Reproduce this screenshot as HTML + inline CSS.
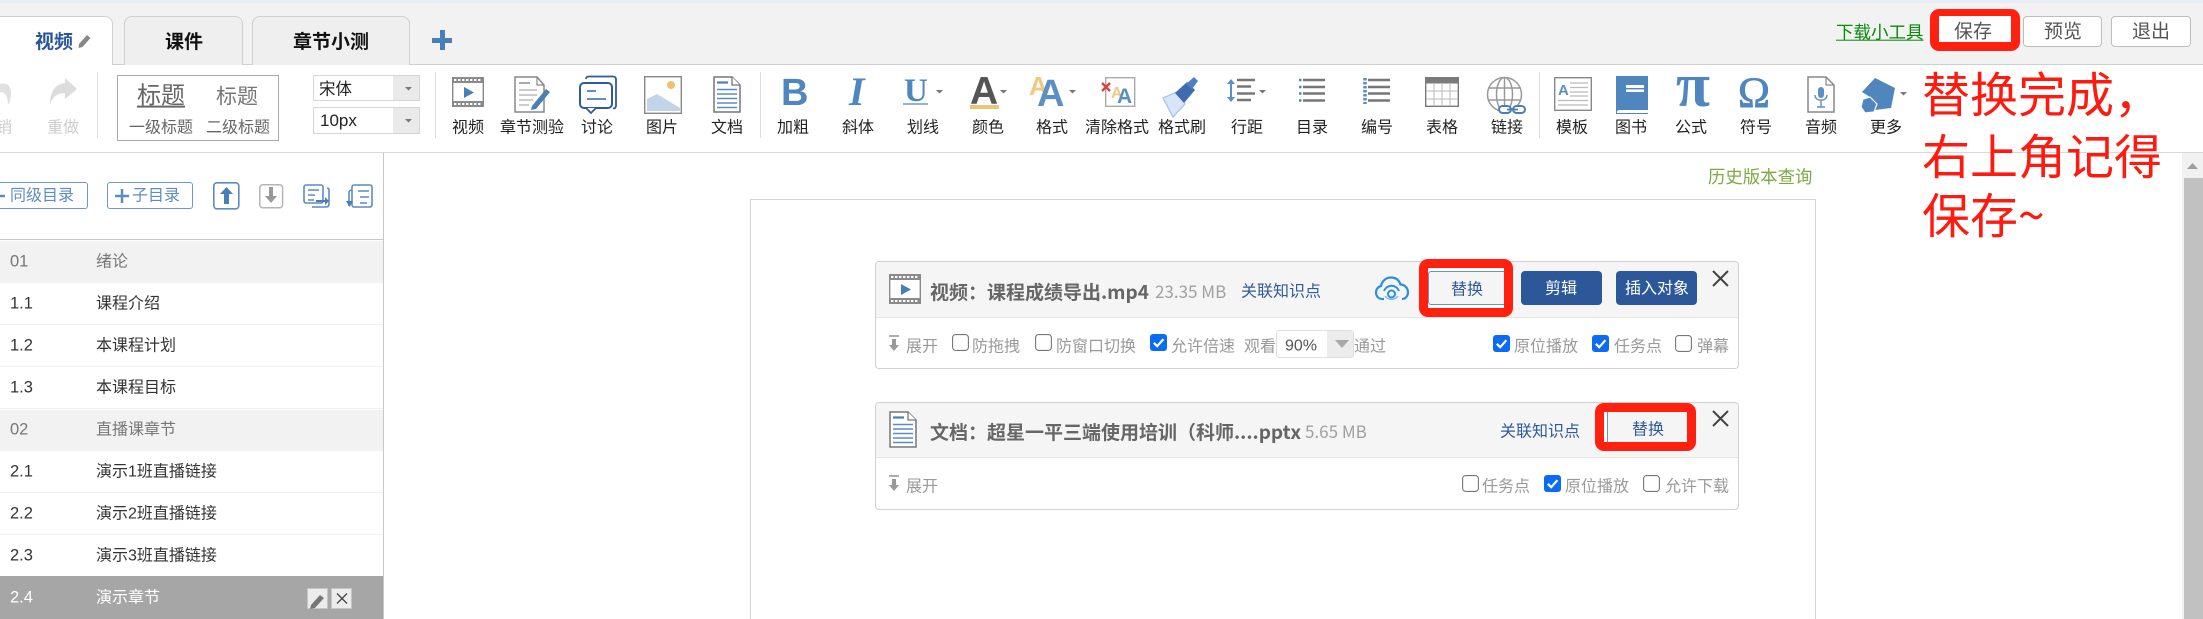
<!DOCTYPE html>
<html lang="zh-CN"><head><meta charset="utf-8"><title>编辑</title>
<style>
html,body{margin:0;padding:0;background:#fff}
#p{position:relative;width:2203px;height:619px;overflow:hidden;background:#fff;font-family:"Liberation Sans","Noto Sans CJK SC",sans-serif;color:#333;filter:blur(.3px)}
#p div{position:absolute;box-sizing:border-box}
.t,.c{position:absolute;white-space:nowrap;line-height:1.2}
.t{transform:translateY(calc(-50% + 1.2px))}
.c{transform:translate(-50%,-50%)}
.l{font-size:16px;color:#222;top:128px}
.h{font-size:19px;font-weight:bold;color:#111;top:42px}
.g{font-size:16px;color:#9a9a9a}
.n{font-size:16.5px;left:10px}
.s{font-size:16px;left:96px}
.y{color:#777}
.tt{font-size:19px;font-weight:bold;color:#666;font-family:"Noto Sans CJK SC",sans-serif;left:930px}
.mb{font-size:17px;color:#a0a0a0;font-family:"Noto Sans CJK SC",sans-serif}
.lk{font-size:16px;color:#2f5a9e}
.bt{font-size:19px;color:#555;top:33px}
.btn{background:#fff;border:1px solid #bdbdbd;border-radius:4px;top:16px;height:31px}
.red{border:9px solid #ff2010;border-radius:9px}
.sel{background:#fff;border:1px solid #d5d5d5}
.sel i{position:absolute;right:0;top:0;bottom:0;width:26px;background:#eaeaea;display:block}
.rr{color:#ff1a10;font-size:48px;left:1922px;font-family:"Noto Sans CJK SC",sans-serif;font-weight:400;line-height:1.2}
</style></head><body><div id="p">

<!-- top bar -->
<div style="left:0;top:0;width:2203px;height:65px;background:#f2f2f2;border-bottom:1px solid #cfcfcf"></div>
<div style="left:0;top:0;width:2203px;height:3px;background:#e8edf3"></div>
<div style="left:-20px;top:16px;width:133px;height:49px;background:#fff;border:1px solid #cfcfcf;border-bottom:0;border-radius:8px 8px 0 0"></div>
<div style="left:124px;top:16px;width:119px;height:49px;background:#efefef;border:1px solid #cfcfcf;border-bottom:0;border-radius:8px 8px 0 0"></div>
<div style="left:252px;top:16px;width:158px;height:49px;background:#efefef;border:1px solid #cfcfcf;border-bottom:0;border-radius:8px 8px 0 0"></div>
<span class="t h" style="left:35px;color:#2a5699">视频</span>
<span class="t h" style="left:165px">课件</span>
<span class="t h" style="left:293px">章节小测</span>
<div style="left:432px;top:38px;width:20px;height:5px;background:#4a7eb9"></div>
<div style="left:440px;top:30px;width:5px;height:20px;background:#4a7eb9"></div>

<span class="t" style="left:1836px;top:32px;font-size:17.5px;color:#0a8a0a;text-decoration:underline">下载小工具</span>
<div class="btn" style="left:2023px;width:79px"></div>
<div class="btn" style="left:2111px;width:80px"></div>
<div class="red" style="left:1930px;top:9px;width:90px;height:42px;background:#fff;border-width:7px 9px 9px 9px"></div>
<span class="c bt" style="left:1973px">保存</span>
<span class="c bt" style="left:2063px">预览</span>
<span class="c bt" style="left:2151px">退出</span>

<!-- toolbar -->
<div style="left:0;top:152px;width:2203px;height:1px;background:#d8d8d8"></div>
<div style="left:97px;top:72px;width:1px;height:66px;background:#ddd"></div>
<div style="left:435px;top:72px;width:1px;height:66px;background:#ddd"></div>
<div style="left:760px;top:72px;width:1px;height:66px;background:#ddd"></div>
<div style="left:1539px;top:72px;width:1px;height:66px;background:#ddd"></div>
<span class="c" style="left:4px;top:128px;font-size:16px;color:#ccc">销</span>
<span class="c" style="left:63px;top:128px;font-size:16px;color:#ccc">重做</span>
<div style="left:117px;top:75px;width:162px;height:66px;border:1px solid #aaa;background:#fff"></div>
<span class="c" style="left:161px;top:97px;font-size:24px;color:#666;text-decoration:underline">标题</span>
<span class="c" style="left:237px;top:97px;font-size:21px;color:#777">标题</span>
<span class="c" style="left:161px;top:128px;font-size:16px;color:#666">一级标题</span>
<span class="c" style="left:238px;top:128px;font-size:16px;color:#666">二级标题</span>
<div class="sel" style="left:313px;top:75px;width:107px;height:26px"><i></i></div>
<div class="sel" style="left:313px;top:107px;width:107px;height:27px"><i></i></div>
<span class="t" style="left:319px;top:89px;font-size:16.5px;color:#222">宋体</span>
<span class="t" style="left:320px;top:120px;font-size:17px;color:#222">10px</span>

<span class="c l" style="left:468px">视频</span>
<span class="c l" style="left:532px">章节测验</span>
<span class="c l" style="left:597px">讨论</span>
<span class="c l" style="left:662px">图片</span>
<span class="c l" style="left:727px">文档</span>
<span class="c l" style="left:793px">加粗</span>
<span class="c l" style="left:858px">斜体</span>
<span class="c l" style="left:923px">划线</span>
<span class="c l" style="left:988px">颜色</span>
<span class="c l" style="left:1052px">格式</span>
<span class="c l" style="left:1117px">清除格式</span>
<span class="c l" style="left:1182px">格式刷</span>
<span class="c l" style="left:1247px">行距</span>
<span class="c l" style="left:1312px">目录</span>
<span class="c l" style="left:1377px">编号</span>
<span class="c l" style="left:1442px">表格</span>
<span class="c l" style="left:1507px">链接</span>
<span class="c l" style="left:1572px">模板</span>
<span class="c l" style="left:1631px">图书</span>
<span class="c l" style="left:1691px">公式</span>
<span class="c l" style="left:1756px">符号</span>
<span class="c l" style="left:1821px">音频</span>
<span class="c l" style="left:1886px">更多</span>

<!-- sidebar -->
<div style="left:383px;top:153px;width:1px;height:466px;background:#c8c8c8"></div>
<div style="left:-10px;top:182px;width:98px;height:27px;border:1.5px solid #6a9acb;border-radius:3px"></div>
<div style="left:107px;top:182px;width:86px;height:27px;border:1.5px solid #6a9acb;border-radius:3px"></div>
<span class="t" style="left:10px;top:195px;font-size:16px;color:#5d8cc0">同级目录</span>
<span class="t" style="left:132px;top:195px;font-size:16px;color:#5d8cc0">子目录</span>

<div style="left:0;top:239px;width:383px;height:1px;background:#c8c8c8"></div>
<div style="left:0;top:241px;width:383px;height:42px;background:#f2f2f2"></div>
<div style="left:0;top:324px;width:383px;height:1px;background:#efefef"></div>
<div style="left:0;top:366px;width:383px;height:1px;background:#efefef"></div>
<div style="left:0;top:408px;width:383px;height:1px;background:#efefef"></div>
<div style="left:0;top:410px;width:383px;height:41px;background:#f2f2f2"></div>
<div style="left:0;top:492px;width:383px;height:1px;background:#efefef"></div>
<div style="left:0;top:534px;width:383px;height:1px;background:#efefef"></div>
<div style="left:0;top:576px;width:383px;height:43px;background:#a6a6a6"></div>
<div style="left:307px;top:588px;width:21px;height:21px;background:#ececec;border:1px solid #c4c4c4"></div>
<div style="left:331px;top:588px;width:21px;height:21px;background:#ececec;border:1px solid #c4c4c4"></div>

<span class="t n y" style="top:261px">01</span><span class="t s y" style="top:261px">绪论</span>
<span class="t n" style="top:303px">1.1</span><span class="t s" style="top:303px">课程介绍</span>
<span class="t n" style="top:345px">1.2</span><span class="t s" style="top:345px">本课程计划</span>
<span class="t n" style="top:387px">1.3</span><span class="t s" style="top:387px">本课程目标</span>
<span class="t n y" style="top:429px">02</span><span class="t s y" style="top:429px">直播课章节</span>
<span class="t n" style="top:471px">2.1</span><span class="t s" style="top:471px">演示1班直播链接</span>
<span class="t n" style="top:513px">2.2</span><span class="t s" style="top:513px">演示2班直播链接</span>
<span class="t n" style="top:555px">2.3</span><span class="t s" style="top:555px">演示3班直播链接</span>
<span class="t n" style="top:597px;color:#fff">2.4</span><span class="t s" style="top:597px;color:#fff">演示章节</span>

<!-- content -->
<span class="t" style="left:1708px;top:176px;font-size:17.4px;color:#7fa843">历史版本查询</span>
<div style="left:750px;top:199px;width:1066px;height:440px;border:1px solid #d5d5d5"></div>

<!-- card 1 -->
<div style="left:875px;top:261px;width:864px;height:108px;border:1px solid #d0d0d0;border-radius:4px;background:#fff"></div>
<div style="left:876px;top:262px;width:862px;height:56px;background:#f5f5f5;border-bottom:1px solid #e6e6e6;border-radius:3px 3px 0 0"></div>
<span class="t tt" style="top:291px">视频：课程成绩导出.mp4</span>
<span class="t mb" style="left:1155px;top:290px">23.35 MB</span>
<span class="t lk" style="left:1241px;top:291px">关联知识点</span>
<div style="left:1521px;top:271px;width:81px;height:34px;background:#2c5899;border-radius:4px"></div>
<div style="left:1616px;top:271px;width:81px;height:34px;background:#2c5899;border-radius:4px"></div>
<span class="c" style="left:1561px;top:289px;font-size:16px;color:#fff">剪辑</span>
<span class="c" style="left:1657px;top:289px;font-size:16px;color:#fff">插入对象</span>
<div style="left:1419px;top:259px;width:94px;height:58px;border:9px solid #ff2010;border-radius:9px;background:#fff"></div>
<div style="left:1428px;top:271px;width:76px;height:34px;background:#f5f5f5;border:1px solid #6d8fc4;border-right:0;border-radius:3px 0 0 3px"></div>
<span class="c lk" style="left:1467px;top:290px">替换</span>
<span class="t g" style="left:906px;top:346px">展开</span>
<span class="t g" style="left:972px;top:346px">防拖拽</span>
<span class="t g" style="left:1056px;top:346px">防窗口切换</span>
<span class="t g" style="left:1171px;top:346px">允许倍速</span>
<span class="t g" style="left:1244px;top:346px">观看</span>
<div style="left:1276px;top:330px;width:78px;height:28px;background:#fff;border:1px solid #ddd;border-radius:3px"><i style="position:absolute;right:0;top:0;bottom:0;width:26px;background:#ececec;display:block"></i></div>
<span class="c" style="left:1301px;top:346px;font-size:16px;color:#555">90%</span>
<span class="t g" style="left:1354px;top:346px">通过</span>
<span class="t g" style="left:1514px;top:346px">原位播放</span>
<span class="t g" style="left:1614px;top:346px">任务点</span>
<span class="t g" style="left:1697px;top:346px">弹幕</span>

<!-- card 2 -->
<div style="left:875px;top:402px;width:864px;height:108px;border:1px solid #d0d0d0;border-radius:4px;background:#fff"></div>
<div style="left:876px;top:403px;width:862px;height:55px;background:#f5f5f5;border-bottom:1px solid #e6e6e6;border-radius:3px 3px 0 0"></div>
<span class="t tt" style="top:431px">文档：超星一平三端使用培训（科师....pptx</span>
<span class="t mb" style="left:1305px;top:430px">5.65 MB</span>
<span class="t lk" style="left:1500px;top:431px">关联知识点</span>
<div style="left:1595px;top:403px;width:101px;height:48px;border:9px solid #ff2010;border-radius:9px;background:#fff"></div>
<div style="left:1607px;top:412px;width:80px;height:30px;background:#f5f5f5;border-left:1px solid #6d8fc4"></div>
<span class="c lk" style="left:1648px;top:430px">替换</span>
<span class="t g" style="left:906px;top:486px">展开</span>
<span class="t g" style="left:1482px;top:486px">任务点</span>
<span class="t g" style="left:1565px;top:486px">原位播放</span>
<span class="t g" style="left:1665px;top:486px">允许下载</span>

<!-- scrollbar -->
<div style="left:2182px;top:153px;width:21px;height:466px;background:#f1f1f1"></div>
<div style="left:2184px;top:178px;width:19px;height:441px;background:#c1c1c1"></div>

<!-- annotation -->
<span class="rr" style="position:absolute;top:63px;white-space:nowrap">替换完成，</span>
<span class="rr" style="position:absolute;top:125px;white-space:nowrap">右上角记得</span>
<span class="rr" style="position:absolute;top:184px;white-space:nowrap">保存~</span>

<!-- icons -->
<svg style="position:absolute;left:0;top:0" width="2203" height="619" viewBox="0 0 2203 619">
<defs>
<g id="vid">
<rect x="452.7" y="77.7" width="30.6" height="28.6" fill="#fff" stroke="#8a8a8a" stroke-width="1.4"/>
<rect x="452" y="77" width="32" height="6" fill="#8a8a8a"/><rect x="452" y="101" width="32" height="6" fill="#8a8a8a"/>
<path d="M454 80h28M454 104h28" stroke="#fff" stroke-width="2" stroke-dasharray="2.4 1.6"/>
<path d="M464 87l10 5.500-10 5.500z" fill="#4a7fb5"/>
</g>
<g id="doc">
<path d="M714 77h18l8 8v27h-26z" fill="#fff" stroke="#777" stroke-width="1.5"/>
<path d="M732 77v8h8" fill="#fff" stroke="#777" stroke-width="1.300"/>
<path d="M717 82.500h11" stroke="#4a7fb5" stroke-width="2.200"/>
<path d="M717 89.500h20M717 94h20M717 98.500h20M717 103h20M717 107.500h20" stroke="#5b8cc0" stroke-width="1.400"/>
</g>
<g id="ck"><rect width="17" height="17" rx="3" fill="#0a6cf5"/><path d="M3.800 8.800l3.400 3.400 6.200-7" fill="none" stroke="#fff" stroke-width="2.200"/></g>
<g id="un"><rect x=".6" y=".6" width="15.800" height="15.800" rx="3" fill="#fff" stroke="#767676" stroke-width="1.100"/></g>
<path id="ar" d="M0 0h7l-3.500 3.500z" fill="#777"/>
<g id="x"><path d="M0 0l15 15M15 0l-15 15" stroke="#444" stroke-width="2"/></g>
<g id="dn"><path d="M889 336h10" stroke="#999" stroke-width="1.600"/><path d="M892 339h4v6h3l-5 6-5-6h3z" fill="#999"/></g>
</defs>

<!-- pencil on tab -->
<path d="M79 44l8-9 3.500 3-8 9-4 1z" fill="#888"/>
<!-- undo / redo -->
<path d="M0 84c7-2 12 2 11 12c-.500 3-1 6-3 9c0-7-2-13-8-13z" fill="#e0e0e0"/>
<path d="M65 78l12 11-12 10v-6c-7 0-12 3-15 11c0-12 5-20 15-21z" fill="#dcdcdc"/>
<!-- select arrows -->
<use href="#ar" x="405" y="87"/><use href="#ar" x="405" y="119"/>

<use href="#vid"/>
<!-- quiz -->
<path d="M515 77h22l7 8v27h-29z" fill="#fff" stroke="#888" stroke-width="1.500"/>
<path d="M537 77v8h7" fill="none" stroke="#888" stroke-width="1.200"/>
<path d="M519 83h11" stroke="#aaa" stroke-width="2"/>
<path d="M519 90h18M519 95h18M519 100h14M519 105h10" stroke="#bbb" stroke-width="1.500"/>
<path d="M532 106l14-17 4 3-14 17-5 1z" fill="#4a7fb5"/>
<!-- discuss -->
<path d="M586 79q0-2.500 3-2.500h24q3 0 3 3v26q0 3-3 3" fill="none" stroke="#2f5a9e" stroke-width="1.800"/>
<rect x="580" y="83" width="32" height="25" rx="4" fill="#fff" stroke="#2f5a9e" stroke-width="2"/>
<path d="M586 108l5 5 5-5" fill="#fff" stroke="#2f5a9e" stroke-width="1.800"/>
<path d="M587 91h9M587 99h19" stroke="#4a7fb5" stroke-width="1.800"/>
<!-- image -->
<rect x="644.700" y="76.700" width="36.600" height="36.600" fill="#fff" stroke="#888" stroke-width="1.400"/>
<circle cx="671" cy="85" r="4" fill="#eec06f"/>
<path d="M647 111v-12l10-5 23 14v3z" fill="#c1d4e9"/>
<use href="#doc"/>
<!-- B I U -->
<text x="781" y="105" font-family="Liberation Sans" font-weight="bold" font-size="38" fill="#4f86bd">B</text>
<text x="849" y="105" font-family="Liberation Serif" font-style="italic" font-weight="bold" font-size="40" fill="#4f86bd">I</text>
<text x="904" y="101" font-family="Liberation Serif" font-weight="bold" font-size="33" fill="#4f86bd">U</text>
<path d="M903 104h25" stroke="#6d9bc8" stroke-width="1.400"/>
<use href="#ar" x="936" y="90"/>
<!-- A colour -->
<text x="970" y="104" font-family="Liberation Sans" font-weight="bold" font-size="39" fill="#555">A</text>
<rect x="970" y="105" width="29" height="4" fill="#edc375"/>
<use href="#ar" x="1000" y="90"/>
<!-- AA -->
<text x="1029" y="95" font-family="Liberation Sans" font-weight="bold" font-size="26" fill="#f0c981">A</text>
<text x="1037" y="106" font-family="Liberation Sans" font-weight="bold" font-size="38" fill="#5b90c3">A</text>
<use href="#ar" x="1069" y="90"/>
<!-- clear -->
<rect x="1105.700" y="77.700" width="29" height="28.600" fill="#fff" stroke="#aaa" stroke-width="1.400"/>
<path d="M1102 83l8 8M1110 83l-8 8" stroke="#d94040" stroke-width="2.400"/>
<text x="1111" y="98" font-family="Liberation Sans" font-weight="bold" font-size="16" fill="#f0c981">A</text>
<text x="1117" y="103" font-family="Liberation Sans" font-weight="bold" font-size="21" fill="#5b90c3">A</text>
<!-- brush -->
<path d="M1163 98l16-7 6 13-12 13z" fill="#d8e6f8" stroke="#a9c8ee" stroke-width="1.400"/>
<path d="M1175 93l12-11 8 8-11 13z" fill="#3f6bb0"/>
<path d="M1186 84l8-7 4 4-6 8z" fill="#4f7fc0"/>
<!-- line spacing -->
<path d="M1231 81v19" stroke="#5b90c3" stroke-width="2"/><path d="M1227 84l4-5 4 5zM1227 97l4 5 4-5z" fill="#5b90c3"/>
<path d="M1237 80h18M1237 86.500h14M1237 93.500h18M1237 100h14" stroke="#777" stroke-width="2.400"/>
<use href="#ar" x="1259" y="90"/>
<!-- list -->
<path d="M1299 80h2.500M1299 87h2.500M1299 93.500h2.500M1299 100.500h2.500" stroke="#4f86bd" stroke-width="2.600"/>
<path d="M1303 80h22M1303 87h22M1303 93.500h22M1303 100.500h22" stroke="#777" stroke-width="2.400"/>
<!-- numbered -->
<path d="M1365 78v26" stroke="#5b90c3" stroke-width="3.600" stroke-dasharray="2.500 1.500"/>
<path d="M1368 80h22M1368 87h22M1368 93.500h22M1368 100.500h22" stroke="#777" stroke-width="2.400"/>
<!-- table -->
<rect x="1425.700" y="77.700" width="32.600" height="28.600" fill="#fff" stroke="#7a7a7a" stroke-width="1.400"/>
<rect x="1425" y="77" width="34" height="6.500" fill="#7a7a7a"/>
<path d="M1434 83v23M1442 83v23M1450 83v23M1426 91h32M1426 99h32" stroke="#bbb" stroke-width="1"/>
<!-- globe -->
<g fill="none" stroke="#999" stroke-width="1.500"><circle cx="1504.500" cy="94.500" r="17"/><ellipse cx="1504.500" cy="94.500" rx="8" ry="17"/><path d="M1504.500 77v35M1488 88h33M1488 100h33"/></g>
<rect x="1499" y="106" width="12" height="7" rx="3.500" fill="#fff" stroke="#4a7fb5" stroke-width="2"/>
<rect x="1513" y="106" width="12" height="7" rx="3.500" fill="#fff" stroke="#4a7fb5" stroke-width="2"/>
<path d="M1507 109.500h11" stroke="#4a7fb5" stroke-width="1.800"/>
<!-- template -->
<rect x="1554.700" y="77.700" width="36.600" height="32.600" fill="#fff" stroke="#888" stroke-width="1.400"/>
<text x="1558" y="95" font-family="Liberation Sans" font-weight="bold" font-size="15" fill="#5b90c3">A</text>
<path d="M1570 83h18M1570 87.500h18M1570 92h18M1570 96h18M1558 100.500h30M1558 105h30" stroke="#bbb" stroke-width="1.300"/>
<!-- book -->
<path d="M1616 76h32v34h-28q-3 0-3 2v-1 2h31v1h-32z" fill="#4f86bd"/>
<rect x="1626" y="85" width="18" height="7" fill="#fff"/><rect x="1626" y="88" width="18" height="1.400" fill="#4f86bd"/>
<!-- pi / omega -->
<text x="1676" y="106" font-family="Liberation Serif" font-weight="bold" font-size="62" fill="#4f86bd">π</text>
<text x="1738" y="107" font-family="Liberation Serif" font-size="43" fill="#4f86bd" stroke="#4f86bd" stroke-width=".8">Ω</text>
<!-- audio -->
<path d="M1808 77h18l8 8v27h-26z" fill="#fff" stroke="#888" stroke-width="1.500"/>
<path d="M1826 77v8h8" fill="none" stroke="#888" stroke-width="1.200"/>
<rect x="1818" y="87" width="6" height="11" rx="3" fill="#5b90c3"/>
<path d="M1815 95c0 7 12 7 12 0M1821 101v6M1817 107h8" fill="none" stroke="#5b90c3" stroke-width="1.400"/>
<!-- more -->
<path d="M1875 78l20 10-4 20-16 2-5-13-8-5z" fill="#4f86bd"/>
<path d="M1870 97l7 7-3 8-9 1-4-6 2-8z" fill="#4f86bd" stroke="#fff" stroke-width="1.200"/>
<use href="#ar" x="1900" y="92"/>

<!-- sidebar icons -->
<path d="M0 196h5" stroke="#5d8cc0" stroke-width="2.500"/>
<path d="M115 196h14M122 189v14" stroke="#5d8cc0" stroke-width="2.500"/>
<rect x="213.800" y="182.800" width="25" height="26" rx="3" fill="#fff" stroke="#5d8cc0" stroke-width="1.600"/>
<path d="M224 194h-4l6.500-7 6.500 7h-4v10h-5z" fill="#4a7fb5"/>
<rect x="259.800" y="184.800" width="22.800" height="23" rx="3" fill="#fff" stroke="#b5b5b5" stroke-width="1.500"/>
<path d="M269 187h4v9h4l-6 7-6-7h4z" fill="#999"/>
<g fill="none" stroke="#5d8cc0" stroke-width="1.600"><rect x="304" y="185" width="19" height="18" rx="2"/><path d="M308 190h11M308 195h7M308 200h6M312 207h14q3 0 3-3v-14q0-2-2-2"/></g>
<path d="M316 200h9v-3l4 4-4 4v-3h-9z" fill="#4a7fb5"/>
<g fill="none" stroke="#5d8cc0" stroke-width="1.600"><rect x="352" y="185" width="20" height="22" rx="2"/><path d="M358 191h11M360 197h9M360 203h7"/><path d="M352 190q-3 0-3 3v13"/></g>
<path d="M346 201l3.500 6 3.500-6z" fill="#4a7fb5"/>

<!-- row buttons -->
<path d="M311 605l9-10 4 3-9 10-5 1z" fill="#777"/>
<path d="M337 593.500l10 10M347 593.500l-10 10" stroke="#444" stroke-width="1.300"/>

<!-- card icons -->
<use href="#vid" x="437" y="197"/>
<use href="#doc" x="176" y="335"/>
<!-- cloud -->
<path d="M1384 299h-2c-4 0-6-3.500-6-6.500 0-3.500 2.500-6 5-6.500 1-5 5-8.500 10-8.500 4.500 0 8 2.500 9.500 7 4 0 7.500 3.500 7.500 8 0 3.500-2.500 6.500-6 6.500" fill="none" stroke="#2d8fe0" stroke-width="2.200"/>
<path d="M1384 291a8 8 0 0 1 15 0" fill="none" stroke="#2d8fe0" stroke-width="2"/>
<circle cx="1391.500" cy="294" r="3.500" fill="none" stroke="#2d8fe0" stroke-width="2"/>
<path d="M1385 296a8 8 0 0 0 13 0" fill="none" stroke="#7cbcf0" stroke-width="1.500"/>
<!-- close -->
<use href="#x" x="1713" y="271"/><use href="#x" x="1713" y="411"/>
<!-- expand -->
<use href="#dn"/><use href="#dn" y="140"/>
<!-- checkboxes card 1 -->
<use href="#un" x="952" y="334"/><use href="#un" x="1035" y="334"/><use href="#ck" x="1150" y="334"/>
<use href="#ck" x="1493" y="335"/><use href="#ck" x="1592" y="335"/><use href="#un" x="1675" y="335"/>
<!-- card 1 select arrow -->
<path d="M1335 340h14l-7 8z" fill="#a8a8a8"/>
<!-- checkboxes card 2 -->
<use href="#un" x="1462" y="475"/><use href="#ck" x="1544" y="475"/><use href="#un" x="1643" y="475"/>
<!-- scrollbar arrow -->
<path d="M2187 169l5.500-6 5.500 6z" fill="#a0a0a0"/>
</svg>
</div></body></html>
